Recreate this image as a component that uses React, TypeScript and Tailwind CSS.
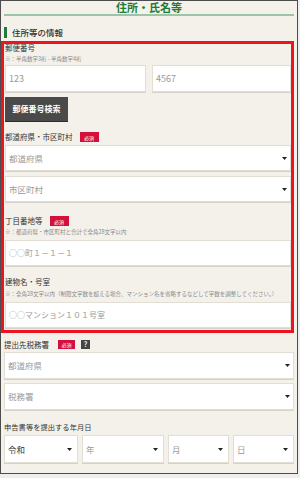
import React from "react"

const font = "font-['Noto_Sans_CJK_JP','Noto_Sans',sans-serif]"

function Arrow({ className = "" }: { className?: string }) {
  return (
    <svg width="5" height="3" viewBox="0 0 5 3" className={className}>
      <path d="M0 0h5L2.5 3z" fill="#222" />
    </svg>
  )
}

function Badge() {
  return (
    <span className="inline-flex h-[10px] w-[19px] items-center justify-center bg-[#d4103c] text-[5px] leading-none text-white">
      必須
    </span>
  )
}

function Field({ text, className = "" }: { text: string; className?: string }) {
  return (
    <div
      className={`flex items-center border border-[#e2ded6] bg-white pl-[3px] text-[8px] text-[#9a9a9a] shadow-[0_1px_0_#d6d2c9] ${className}`}
    >
      {text}
    </div>
  )
}

function Select({ text, className = "", dark = false }: { text: string; className?: string; dark?: boolean }) {
  return (
    <div
      className={`flex items-center justify-between border border-[#e2ded6] bg-white pl-[3px] pr-[3px] text-[8.5px] shadow-[0_1px_0_#d6d2c9] ${dark ? "text-[#333]" : "text-[#9a9a9a]"} ${className}`}
    >
      <span>{text}</span>
      <Arrow />
    </div>
  )
}

export default function App() {
  return (
    <div className={`h-[478px] w-[300px] bg-[#eeeeee] ${font}`}>
      <div className="flex h-[474px] w-[298px] flex-col overflow-hidden border border-[#4d4d4d] bg-[#f4f1ea] px-[3px]">
        <h1 className="text-center text-[11px] font-bold leading-[12px] text-[#1e7b3b]">住所・氏名等</h1>
        <div className="mt-[1px] h-[2px] bg-[#9cc4a6]" />

        <div className="mt-[11px] flex h-[11px] items-center">
          <span className="h-[11px] w-[3px] bg-[#1f7a3c]" />
          <span className="ml-[5px] text-[8.5px] font-medium leading-none text-[#333]">住所等の情報</span>
        </div>

        <div className="-ml-[3px] mt-[3px] flex w-[293px] flex-col border-[3px] border-[#ec1420] pb-[2px] pl-[1px]">
          <div className="text-[7.5px] leading-[7px] text-[#333]">郵便番号</div>
          <div className="mt-[4px] text-[5.5px] leading-[8px] text-[#8a8a8a]">※：半角数字3桁 - 半角数字4桁</div>
          <div className="mt-[2px] flex gap-[6px]">
            <Field text="123" className="h-[27px] w-[141px] text-[9px]" />
            <Field text="4567" className="h-[27px] flex-1 text-[9px]" />
          </div>
          <button className="mt-[5px] h-[24px] w-[63px] bg-[#4a4a4a] text-[8px] font-bold text-white shadow-[0_1px_0_#2e2e2e]">
            郵便番号検索
          </button>

          <div className="mt-[11px] flex h-[10px] items-center gap-[7px]">
            <span className="text-[7.5px] leading-none text-[#333]">都道府県・市区町村</span>
            <Badge />
          </div>
          <Select text="都道府県" className="mt-[3px] h-[26px]" />
          <Select text="市区町村" className="mt-[5px] h-[26px]" />

          <div className="mt-[14px] flex h-[10px] items-center gap-[7px]">
            <span className="text-[7.5px] leading-none text-[#333]">丁目番地等</span>
            <Badge />
          </div>
          <div className="mt-[2px] text-[5.5px] leading-[8px] text-[#8a8a8a]">※：都道府県・市区町村と合計で全角28文字以内</div>
          <Field text="○○町１－１－１" className="mt-[4px] h-[26px]" />

          <div className="mt-[12px] text-[7.5px] leading-[8px] text-[#333]">建物名・号室</div>
          <div className="mt-[4px] whitespace-nowrap text-[5.5px] leading-[8px] text-[#8a8a8a]">
            ※：全角28文字以内（制限文字数を超える場合、マンション名を省略するなどして字数を調整してください。）
          </div>
          <Field text="○○マンション１０１号室" className="mt-[4px] h-[26px]" />
        </div>

        <div className="mt-[7px] flex h-[9px] items-center">
          <span className="text-[7.5px] leading-none text-[#333]">提出先税務署</span>
          <span className="ml-[9px] inline-flex h-[9px] w-[17px] items-center justify-center bg-[#d4103c] text-[5px] leading-none text-white">
            必須
          </span>
          <span className="ml-[6px] inline-flex h-[9px] w-[9px] items-center justify-center bg-[#444] text-[7px] font-bold leading-none text-white">
            ?
          </span>
        </div>
        <Select text="都道府県" className="mt-[3px] h-[27px]" />
        <Select text="税務署" className="mt-[4px] h-[27px]" />

        <div className="mt-[13px] text-[7.3px] leading-[8px] text-[#333]">申告書等を提出する年月日</div>
        <div className="mt-[4px] flex gap-[4px]">
          <Select text="令和" dark className="h-[28px] w-[74px] pr-[5px]" />
          <Select text="年" className="h-[28px] w-[82px] pr-[5px]" />
          <Select text="月" className="h-[28px] w-[61px] pr-[5px]" />
          <Select text="日" className="h-[28px] flex-1 pr-[5px]" />
        </div>
      </div>
    </div>
  )
}
